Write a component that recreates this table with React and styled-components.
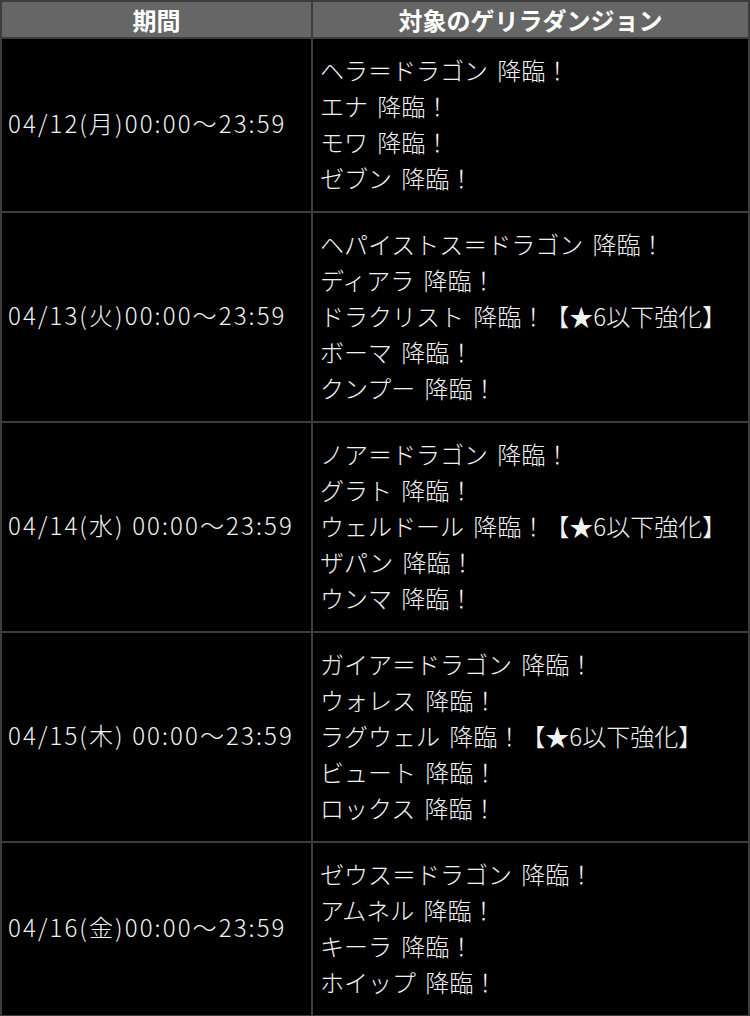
import React from "react";
import styled, { createGlobalStyle } from "styled-components";

const Global = createGlobalStyle`
  html, body { margin: 0; padding: 0; background: #000; }
  body { font-family: "Noto Sans CJK JP", "Noto Sans", sans-serif; }
`;

const Table = styled.table`
  width: 750px;
  border-collapse: collapse;
  table-layout: fixed;
  background: #000;
  color: #f2f2f2;
`;

const HeadCell = styled.th`
  background: #666666;
  color: #ffffff;
  font-weight: 700;
  font-size: 24px;
  line-height: 33px;
  padding: 1px 0 1px;
  border: 2px solid #3d3d3d;
  text-align: center;
  width: ${(p) => p.$w || "auto"};
`;

const DateCell = styled.td`
  border: 2px solid #3d3d3d;
  padding: 12px 2px 16px 6px;
  font-size: 24px;
  font-weight: 300;
  line-height: 36px;
  vertical-align: middle;
  white-space: nowrap;
  letter-spacing: 2.1px;
`;

const ListCell = styled.td`
  border: 2px solid #3d3d3d;
  padding: 13px 7px 15px;
  font-size: 24px;
  font-weight: 300;
  line-height: 36px;
  vertical-align: middle;
  white-space: nowrap;
  word-spacing: 4px;
`;

const Line = styled.div``;

const rows = [
  {
    date: "04/12(月)00:00〜23:59",
    items: ["ヘラ＝ドラゴン 降臨！", "エナ 降臨！", "モワ 降臨！", "ゼブン 降臨！"],
  },
  {
    date: "04/13(火)00:00〜23:59",
    items: [
      "ヘパイストス＝ドラゴン 降臨！",
      "ディアラ 降臨！",
      "ドラクリスト 降臨！【★6以下強化】",
      "ボーマ 降臨！",
      "クンプー 降臨！",
    ],
  },
  {
    date: "04/14(水) 00:00〜23:59",
    items: [
      "ノア＝ドラゴン 降臨！",
      "グラト 降臨！",
      "ウェルドール 降臨！【★6以下強化】",
      "ザパン 降臨！",
      "ウンマ 降臨！",
    ],
  },
  {
    date: "04/15(木) 00:00〜23:59",
    items: [
      "ガイア＝ドラゴン 降臨！",
      "ウォレス 降臨！",
      "ラグウェル 降臨！【★6以下強化】",
      "ビュート 降臨！",
      "ロックス 降臨！",
    ],
  },
  {
    date: "04/16(金)00:00〜23:59",
    items: ["ゼウス＝ドラゴン 降臨！", "アムネル 降臨！", "キーラ 降臨！", "ホイップ 降臨！"],
  },
];

export default function App() {
  return (
    <>
      <Global />
      <Table>
        <thead>
          <tr>
            <HeadCell $w="309px">期間</HeadCell>
            <HeadCell>対象のゲリラダンジョン</HeadCell>
          </tr>
        </thead>
        <tbody>
          {rows.map((r) => (
            <tr key={r.date}>
              <DateCell>{r.date}</DateCell>
              <ListCell>
                {r.items.map((t) => (
                  <Line key={t}>{t}</Line>
                ))}
              </ListCell>
            </tr>
          ))}
        </tbody>
      </Table>
    </>
  );
}
